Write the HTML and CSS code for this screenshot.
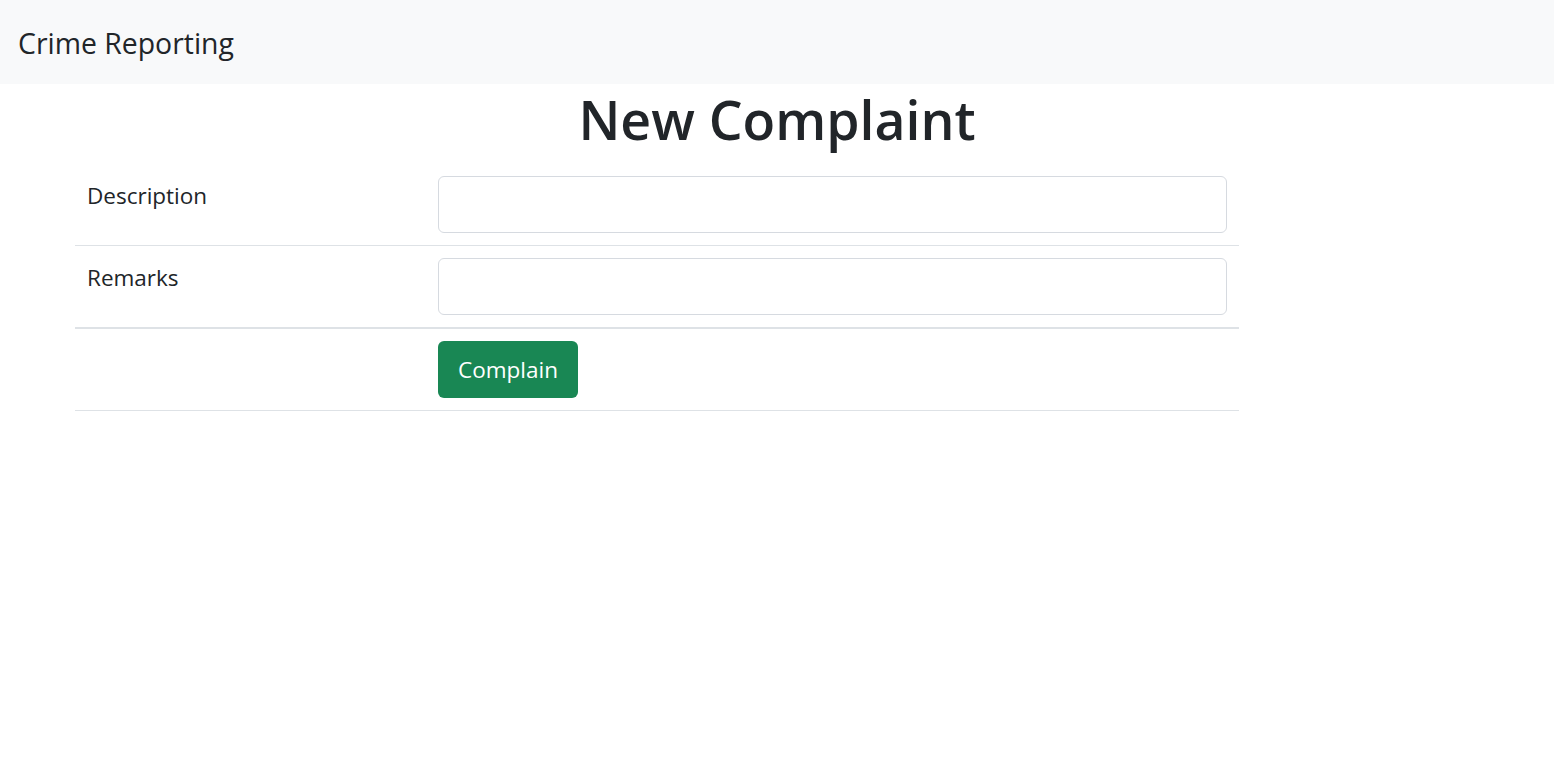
FILE: index.html
```html
<!DOCTYPE html>
<html lang="en">
<head>
<meta charset="utf-8">
<title>New Complaint</title>
<link rel="stylesheet" href="styles.css">
</head>
<body>
<nav class="navbar">
  <a class="brand" href="#">Crime Reporting</a>
</nav>
<main class="container">
  <h1 class="title">New Complaint</h1>
  <form class="form">
    <table class="table">
      <tbody>
        <tr>
          <td class="label-cell">Description</td>
          <td class="field-cell"><input class="input" type="text"></td>
        </tr>
        <tr>
          <td class="label-cell">Remarks</td>
          <td class="field-cell"><input class="input" type="text"></td>
        </tr>
      </tbody>
      <tbody class="group">
        <tr>
          <td class="label-cell"></td>
          <td class="field-cell"><button class="btn" type="button">Complain</button></td>
        </tr>
      </tbody>
    </table>
  </form>
</main>
</body>
</html>
```

FILE: styles.css
```css
html, body {
  margin: 0;
  padding: 0;
}
body {
  font-family: "Open Sans", "Noto Sans", "Liberation Sans", sans-serif;
  font-size: 22.5px;
  line-height: 1.5;
  color: #212529;
  background: #fff;
}
.navbar {
  background: #f8f9fa;
  height: 84px;
  display: flex;
  align-items: center;
  padding: 2px 18px 0;
  box-sizing: border-box;
}
.brand {
  font-size: 28.4px;
  color: #212529;
  text-decoration: none;
  line-height: 1.5;
}
.container {
  padding: 0 0 0 75px;
}
.title {
  margin: 0 0 12px -75px;
  padding-top: 4px;
  height: 68px;
  box-sizing: border-box;
  text-align: center;
  font-size: 53.5px;
  font-weight: 600;
  line-height: 64px;
}
.table {
  width: 1164px;
  border-collapse: collapse;
}
.table td {
  padding: 12px;
  vertical-align: top;
  border-bottom: 1px solid #dee2e6;
}
.group {
  border-top: 2px solid #dee2e6;
}
.label-cell {
  width: 327px;
  padding-top: 15px !important;
}
.input {
  display: block;
  width: 100%;
  height: 57px;
  box-sizing: border-box;
  border: 1px solid #d6dae0;
  border-radius: 6px;
  font: inherit;
  padding: 9px 18px;
  background: #fff;
}
.btn {
  display: block;
  width: 140px;
  height: 57px;
  background: #198754;
  color: #fff;
  border: 0;
  border-radius: 6px;
  font: inherit;
  padding: 0;
}
```
